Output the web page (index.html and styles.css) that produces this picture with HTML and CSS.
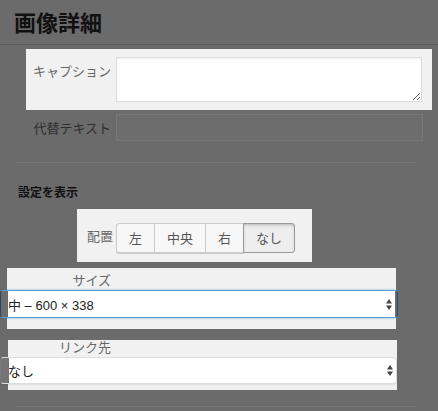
FILE: index.html
```html
<!DOCTYPE html>
<html lang="ja">
<head>
<meta charset="utf-8">
<title>画像詳細</title>
<link rel="stylesheet" href="styles.css">
</head>
<body>
<header class="top">
  <h1 class="title">画像詳細</h1>
</header>
<main class="details">
  <div class="spot spot-caption">
    <label class="lbl" for="caption">キャプション</label>
    <textarea id="caption" class="caption-box"></textarea>
  </div>

  <div class="row-alt">
    <label class="lbl lbl-dim">代替テキスト</label>
    <div class="alt-box"></div>
  </div>

  <hr class="rule">

  <h2 class="section">設定を表示</h2>

  <div class="spot spot-align">
    <span class="lbl lbl-align">配置</span>
    <div class="btn-group">
      <button class="btn">左</button>
      <button class="btn">中央</button>
      <button class="btn">右</button>
      <button class="btn btn-active">なし</button>
    </div>
  </div>

  <div class="spot spot-size">
    <div class="lbl-top lbl-size">サイズ</div>
    <div class="select select-focus">
      <span class="select-text">中 – 600 × 338</span>
      <svg class="arrows" width="6" height="11" viewBox="0 0 6 11"><path d="M0 4.5 L3 0 L6 4.5Z M0 6.5 L3 11 L6 6.5Z"/></svg>
    </div>
  </div>

  <div class="spot spot-link">
    <div class="lbl-top lbl-link">リンク先</div>
    <div class="select select-plain">
      <span class="select-text">なし</span>
      <svg class="arrows" width="6" height="11" viewBox="0 0 6 11"><path d="M0 4.5 L3 0 L6 4.5Z M0 6.5 L3 11 L6 6.5Z"/></svg>
    </div>
  </div>

  <hr class="rule rule-bottom">
</main>
</body>
</html>
```

FILE: styles.css
```css
html, body {
  margin: 0;
  padding: 0;
}

body {
  width: 438px;
  height: 411px;
  overflow: hidden;
  background: #6b6b6b;
  font-family: "Liberation Sans", "Noto Sans CJK JP", sans-serif;
}

/* title bar */
.top {
  height: 45px;
  border-bottom: 1px solid #5b5b5b;
  padding: 0 0 3px 14px;
  box-sizing: border-box;
  display: flex;
  align-items: center;
}

.title {
  margin: 0;
  font-family: "Noto Sans CJK JP", sans-serif;
  font-size: 22px;
  line-height: 1;
  font-weight: 700;
  color: #111;
}

/* highlighted blocks */
.spot {
  background: #f1f1f1;
  box-sizing: border-box;
}

.lbl {
  font-family: "Noto Sans CJK JP", sans-serif;
  font-size: 13px;
  line-height: 18px;
  color: #666;
  text-align: right;
}

.lbl-dim {
  color: #2e2e2e;
}

/* caption */
.spot-caption {
  margin: 4px 0 0 26px;
  width: 406px;
  height: 61px;
  padding-top: 8px;
  display: grid;
  grid-template-columns: 85px 306px;
  column-gap: 5px;
  align-items: start;
}

.spot-caption .lbl {
  margin-top: 5px;
}

.caption-box {
  display: block;
  margin: 0;
  width: 306px;
  height: 45px;
  box-sizing: border-box;
  border: 1px solid #ddd;
  background: #fff;
  box-shadow: inset 0 1px 2px rgba(0, 0, 0, 0.07);
  resize: vertical;
  padding: 2px 4px;
}

/* alt text (dimmed) */
.row-alt {
  margin-top: 4px;
  display: grid;
  grid-template-columns: 111px 307px;
  column-gap: 5px;
  align-items: center;
}

.alt-box {
  height: 27px;
  box-sizing: border-box;
  border: 1px solid #787878;
  background: #6d6d6d;
}

.rule {
  margin: 21px 0 0 17px;
  width: 399px;
  height: 0;
  border: 0;
  border-top: 1px solid #777;
}

.section {
  margin: 21px 0 0 18px;
  font-family: "Noto Sans CJK JP", sans-serif;
  font-size: 12px;
  line-height: 16px;
  font-weight: 700;
  color: #111;
}

/* alignment */
.spot-align {
  margin: 9px 0 0 77px;
  width: 235px;
  height: 53px;
  padding: 14px 0 0 10px;
  display: flex;
  align-items: flex-start;
  gap: 3px;
}

.lbl-align {
  margin-top: 4px;
}

.btn-group {
  display: flex;
}

.btn {
  height: 30px;
  margin: 0 0 0 -1px;
  padding: 0 12px;
  font-family: "Noto Sans CJK JP", sans-serif;
  font-size: 13px;
  line-height: 28px;
  color: #555;
  background: #f7f7f7;
  border: 1px solid #ccc;
  border-radius: 0;
  box-shadow: 0 1px 0 #ccc;
}

.btn:first-child {
  margin-left: 0;
  border-radius: 3px 0 0 3px;
}

.btn:last-child {
  border-radius: 0 3px 3px 0;
}

.btn-active {
  position: relative;
  background: #eee;
  border-color: #999;
  box-shadow: inset 0 2px 5px -3px rgba(0, 0, 0, 0.5);
}

/* size + link dropdowns */
.lbl-top {
  font-family: "Noto Sans CJK JP", sans-serif;
  font-size: 13px;
  line-height: 14px;
  color: #666;
  text-align: right;
}

.spot-size {
  margin: 6px 0 0 7px;
  width: 389px;
  height: 61px;
  padding-top: 5px;
}

.lbl-size {
  width: 104px;
}

.spot-link {
  margin: 11px 0 0 8px;
  width: 389px;
  height: 50px;
}

.lbl-link {
  width: 103px;
}

.select {
  margin-top: 3px;
  box-sizing: border-box;
  display: flex;
  align-items: center;
  justify-content: space-between;
  border-radius: 4px;
  font-size: 13px;
  color: #222;
  background-origin: border-box;
}

.select-text {
  white-space: pre;
}

.arrows {
  fill: #444;
  display: block;
}

.select-focus {
  margin-left: -7px;
  width: 398px;
  height: 28px;
  padding: 0 5px 0 7px;
  border: 1px solid #5b9dd9;
  border-left-color: #2a4660;
  border-right-color: #2a4660;
  box-shadow: 0 0 2px rgba(30, 140, 190, 0.8);
  background: linear-gradient(to right, #6d6d6d 7px, #fff 7px, #fff calc(100% - 2px), #6d6d6d calc(100% - 2px));
}

.select-plain {
  margin-left: -8px;
  width: 397px;
  height: 27px;
  padding: 0 3px 0 7px;
  border: 1px solid #ddd;
  border-left-color: #7a7a7a;
  box-shadow: 0 1px 2px rgba(0, 0, 0, 0.07);
  background: linear-gradient(to right, #747474 8px, #fff 8px);
}

.rule-bottom {
  margin-top: 16px;
}
```
